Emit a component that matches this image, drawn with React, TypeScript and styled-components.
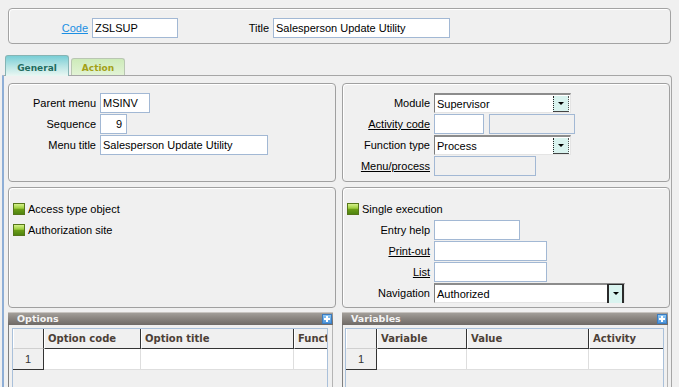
import { FunctionComponent } from "react";
import styled, { createGlobalStyle } from "styled-components";

const GlobalStyle = createGlobalStyle`
  html, body {
    margin: 0;
    padding: 0;
    background: #f0f0f0;
    overflow: hidden;
  }
  body {
    font-family: "Liberation Sans", Arial, sans-serif;
    font-size: 11px;
    color: #000;
  }
`;

const Screen = styled.div`
  width: 679px;
  height: 387px;
  overflow: hidden;
  box-sizing: border-box;
  padding-top: 8px;
`;

const HeaderBox = styled.div`
  width: 663px;
  height: 36px;
  margin-left: 8px;
  box-sizing: border-box;
  border: 1px solid #a3a3a3;
  border-radius: 4px;
  box-shadow: inset 1px 1px 0 #fff;
  display: flex;
  align-items: flex-start;
  padding-top: 9px;
`;

const Label = styled.span<{ $width: number; $link?: boolean; $underline?: boolean }>`
  width: ${(p) => p.$width}px;
  flex-shrink: 0;
  text-align: right;
  margin-right: 4px;
  height: 20px;
  line-height: 20px;
  white-space: nowrap;
  color: ${(p) => (p.$link ? "#1b8fe3" : "#000")};
  text-decoration: ${(p) => (p.$link || p.$underline ? "underline" : "none")};
`;

const TextBox = styled.div<{ $width: number; $disabled?: boolean; $right?: boolean }>`
  width: ${(p) => p.$width}px;
  height: 20px;
  box-sizing: border-box;
  border: 1px solid #a2b8d4;
  background: ${(p) => (p.$disabled ? "#f0f0f0" : "#fff")};
  padding: 0 ${(p) => (p.$right ? 4 : 2)}px 0 2px;
  line-height: 18px;
  text-align: ${(p) => (p.$right ? "right" : "left")};
  white-space: nowrap;
  overflow: hidden;
  flex-shrink: 0;
`;

const SelectBox = styled.div<{ $width: number }>`
  width: ${(p) => p.$width}px;
  height: 20px;
  box-sizing: border-box;
  border-style: solid;
  border-width: 2px 1px 1px 1px;
  border-color: #8c8c8c #e4e4e4 #e4e4e4 #7c7c7c;
  background: #fff;
  display: flex;
  align-items: center;
  justify-content: space-between;
  padding: 0 1px 0 2px;
  flex-shrink: 0;
`;

const DropButton = styled.span<{ $framed?: boolean }>`
  width: ${(p) => (p.$framed ? 17 : 16)}px;
  height: ${(p) => (p.$framed ? 19 : 16)}px;
  box-sizing: border-box;
  background: #d9f3ef;
  border-left: 1px dotted #222;
  border-right: ${(p) => (p.$framed ? "2px solid #2a2a2a" : "1px dotted #555")};
  border-top: ${(p) => (p.$framed ? "1px solid #2a2a2a" : "none")};
  border-bottom: ${(p) => (p.$framed ? "none" : "1px solid #444")};
  ${(p) => (p.$framed ? "border-left: 2px solid #2a2a2a; margin-right: -1px; margin-top: -1px;" : "")}
  display: flex;
  align-items: center;
  justify-content: center;
  &::after {
    content: "";
    border-left: 3px solid transparent;
    border-right: 3px solid transparent;
    border-top: 3px solid #000;
  }
`;

const TabBar = styled.div`
  display: flex;
  align-items: flex-end;
  height: 21px;
  margin-top: 10px;
  padding-left: 5px;
  position: relative;
  z-index: 1;
`;

const Tab = styled.div<{ $active?: boolean }>`
  box-sizing: border-box;
  width: ${(p) => (p.$active ? 64 : 54)}px;
  height: ${(p) => (p.$active ? 21 : 17)}px;
  margin-right: 2px;
  margin-bottom: ${(p) => (p.$active ? -1 : 0)}px;
  border: 1px solid ${(p) => (p.$active ? "#86b4b4" : "#b9c6b2")};
  border-bottom: none;
  border-radius: 3px 3px 0 0;
  background: ${(p) =>
    p.$active
      ? "linear-gradient(#79ced6 0%, #b6e4e4 50%, #eaf7f3 100%)"
      : "linear-gradient(#cdebb9 0%, #e2f3d5 100%)"};
  color: ${(p) => (p.$active ? "#1f6c60" : "#a3a116")};
  font-family: "DejaVu Sans", Verdana, sans-serif;
  font-weight: bold;
  font-size: 9px;
  display: flex;
  align-items: center;
  justify-content: center;
  padding-top: ${(p) => (p.$active ? 3 : 1)}px;
`;

const TabPage = styled.div`
  width: 670px;
  margin-left: 2px;
  box-sizing: border-box;
  border-left: 2px solid #8eaed6;
  border-top: 1px solid #a6a6a6;
  border-right: 1px solid #a6a6a6;
  border-top-right-radius: 4px;
  padding: 7px 1px 0 4px;
  height: 320px;
`;

const PanelGrid = styled.div`
  display: grid;
  grid-template-columns: 328px 328px;
  grid-template-rows: 99px 121px;
  column-gap: 6px;
  row-gap: 5px;
`;

const Panel = styled.div<{ $top: number }>`
  box-sizing: border-box;
  border: 1px solid #a0a0a0;
  border-radius: 4px;
  box-shadow: inset 1px 1px 0 #fff;
  padding-top: ${(p) => p.$top}px;
  display: flex;
  flex-direction: column;
  gap: 1px;
`;

const FieldRow = styled.div`
  display: flex;
  align-items: center;
  height: 20px;
`;

const Pair = styled.div`
  display: flex;
  gap: 5px;
`;

const CheckRow = styled.div`
  display: flex;
  align-items: center;
  height: 20px;
  padding-left: 4px;
  gap: 3px;
`;

const CheckMark = styled.span`
  width: 12px;
  height: 12px;
  box-sizing: border-box;
  border: 1px solid #56761a;
  background: linear-gradient(#d4f08a 0%, #a6d44a 35%, #86b82a 50%, #6a9c16 55%, #4f8410 100%);
  flex-shrink: 0;
`;

const GridRow = styled.div`
  display: grid;
  grid-template-columns: 325px 326px;
  column-gap: 9px;
  margin-top: 4px;
`;

const GridBlock = styled.div`
  box-sizing: border-box;
  border-left: 1px solid #7f7f7f;
  border-right: 1px solid #b4b4b4;
  height: 90px;
  display: flex;
  flex-direction: column;
`;

const GridTitle = styled.div`
  height: 12px;
  background: linear-gradient(#a29e99 0%, #8a8580 45%, #6f6a66 100%);
  border-top: 1px solid #c8c4c0;
  margin: 0 -1px;
  display: flex;
  align-items: center;
  justify-content: space-between;
  padding: 0 1px 0 9px;
  color: #f4f4f4;
  font-family: "DejaVu Sans", Verdana, sans-serif;
  font-weight: bold;
  font-size: 9.5px;
  line-height: 12px;
`;

const PlusIcon = styled.span`
  width: 10px;
  height: 10px;
  background: linear-gradient(#8fc8f4, #4a94dc);
  border: 1px solid #3c7cc0;
  box-sizing: border-box;
  position: relative;
  &::before,
  &::after {
    content: "";
    position: absolute;
    background: #fff;
  }
  &::before {
    left: 1px;
    right: 1px;
    top: 3px;
    height: 2px;
  }
  &::after {
    top: 1px;
    bottom: 1px;
    left: 3px;
    width: 2px;
  }
`;

const GridBody = styled.div<{ $left: number; $right: number }>`
  margin: 3px ${(p) => p.$right}px 0 ${(p) => p.$left}px;
  flex: 1;
  border: 1px solid #a9c0da;
  border-bottom: none;
  overflow: hidden;
`;

const Table = styled.div<{ $cols: string }>`
  display: grid;
  grid-template-columns: ${(p) => p.$cols};
  grid-template-rows: 20px 21px;
  width: max-content;
`;

const HeadCell = styled.div<{ $corner?: boolean }>`
  box-sizing: border-box;
  background: #f0f0f0;
  border-right: 1px solid #333;
  border-left: 1px solid #fff;
  border-bottom: 1px solid ${(p) => (p.$corner ? "#d0d0d0" : "#333")};
  padding-left: 3px;
  display: flex;
  align-items: center;
  font-family: "DejaVu Sans", Verdana, sans-serif;
  font-weight: bold;
  font-size: 10px;
  color: #4c4037;
  white-space: nowrap;
  overflow: hidden;
`;

const NumCell = styled.div`
  box-sizing: border-box;
  background: #f0f0f0;
  border-right: 1px solid #333;
  border-bottom: 1px solid #333;
  display: flex;
  align-items: center;
  justify-content: center;
  color: #333;
`;

const DataCell = styled.div`
  box-sizing: border-box;
  background: #fff;
  border-right: 1px solid #dedede;
  border-bottom: 1px solid #dedede;
`;

type GridProps = {
  title: string;
  cols: string;
  headers: string[];
  left: number;
  right: number;
};

const DataGrid: FunctionComponent<GridProps> = ({ title, cols, headers, left, right }) => (
  <GridBlock>
    <GridTitle>
      {title}
      <PlusIcon />
    </GridTitle>
    <GridBody $left={left} $right={right}>
      <Table $cols={cols}>
        <HeadCell $corner />
        {headers.map((h) => (
          <HeadCell key={h}>{h}</HeadCell>
        ))}
        <NumCell>1</NumCell>
        {headers.map((h) => (
          <DataCell key={h} />
        ))}
      </Table>
    </GridBody>
  </GridBlock>
);

const App: FunctionComponent = () => {
  return (
    <Screen>
      <GlobalStyle />
      <HeaderBox>
        <Label $width={79} $link>
          Code
        </Label>
        <TextBox $width={86}>ZSLSUP</TextBox>
        <Label $width={91}>Title</Label>
        <TextBox $width={177}>Salesperson Update Utility</TextBox>
      </HeaderBox>

      <TabBar>
        <Tab $active>General</Tab>
        <Tab>Action</Tab>
      </TabBar>

      <TabPage>
        <PanelGrid>
          <Panel $top={9}>
            <FieldRow>
              <Label $width={87}>Parent menu</Label>
              <TextBox $width={50}>MSINV</TextBox>
            </FieldRow>
            <FieldRow>
              <Label $width={87}>Sequence</Label>
              <TextBox $width={27} $right>
                9
              </TextBox>
            </FieldRow>
            <FieldRow>
              <Label $width={87}>Menu title</Label>
              <TextBox $width={168}>Salesperson Update Utility</TextBox>
            </FieldRow>
          </Panel>

          <Panel $top={9}>
            <FieldRow>
              <Label $width={87}>Module</Label>
              <SelectBox $width={137}>
                Supervisor
                <DropButton />
              </SelectBox>
            </FieldRow>
            <FieldRow>
              <Label $width={87} $underline>
                Activity code
              </Label>
              <Pair>
                <TextBox $width={50} />
                <TextBox $width={86} $disabled />
              </Pair>
            </FieldRow>
            <FieldRow>
              <Label $width={87}>Function type</Label>
              <SelectBox $width={137}>
                Process
                <DropButton />
              </SelectBox>
            </FieldRow>
            <FieldRow>
              <Label $width={87} $underline>
                Menu/process
              </Label>
              <TextBox $width={102} $disabled />
            </FieldRow>
          </Panel>

          <Panel $top={11}>
            <CheckRow>
              <CheckMark />
              Access type object
            </CheckRow>
            <CheckRow>
              <CheckMark />
              Authorization site
            </CheckRow>
          </Panel>

          <Panel $top={11}>
            <CheckRow>
              <CheckMark />
              Single execution
            </CheckRow>
            <FieldRow>
              <Label $width={87}>Entry help</Label>
              <TextBox $width={86} />
            </FieldRow>
            <FieldRow>
              <Label $width={87} $underline>
                Print-out
              </Label>
              <TextBox $width={113} />
            </FieldRow>
            <FieldRow>
              <Label $width={87} $underline>
                List
              </Label>
              <TextBox $width={113} />
            </FieldRow>
            <FieldRow>
              <Label $width={87}>Navigation</Label>
              <SelectBox $width={191}>
                Authorized
                <DropButton $framed />
              </SelectBox>
            </FieldRow>
          </Panel>
        </PanelGrid>

        <GridRow>
          <DataGrid
            title="Options"
            cols="31px 97px 153px 80px"
            headers={["Option code", "Option title", "Function"]}
            left={3}
            right={4}
          />
          <DataGrid
            title="Variables"
            cols="31px 90px 122px 75px"
            headers={["Variable", "Value", "Activity"]}
            left={2}
            right={3}
          />
        </GridRow>
      </TabPage>
    </Screen>
  );
};

export default App;
